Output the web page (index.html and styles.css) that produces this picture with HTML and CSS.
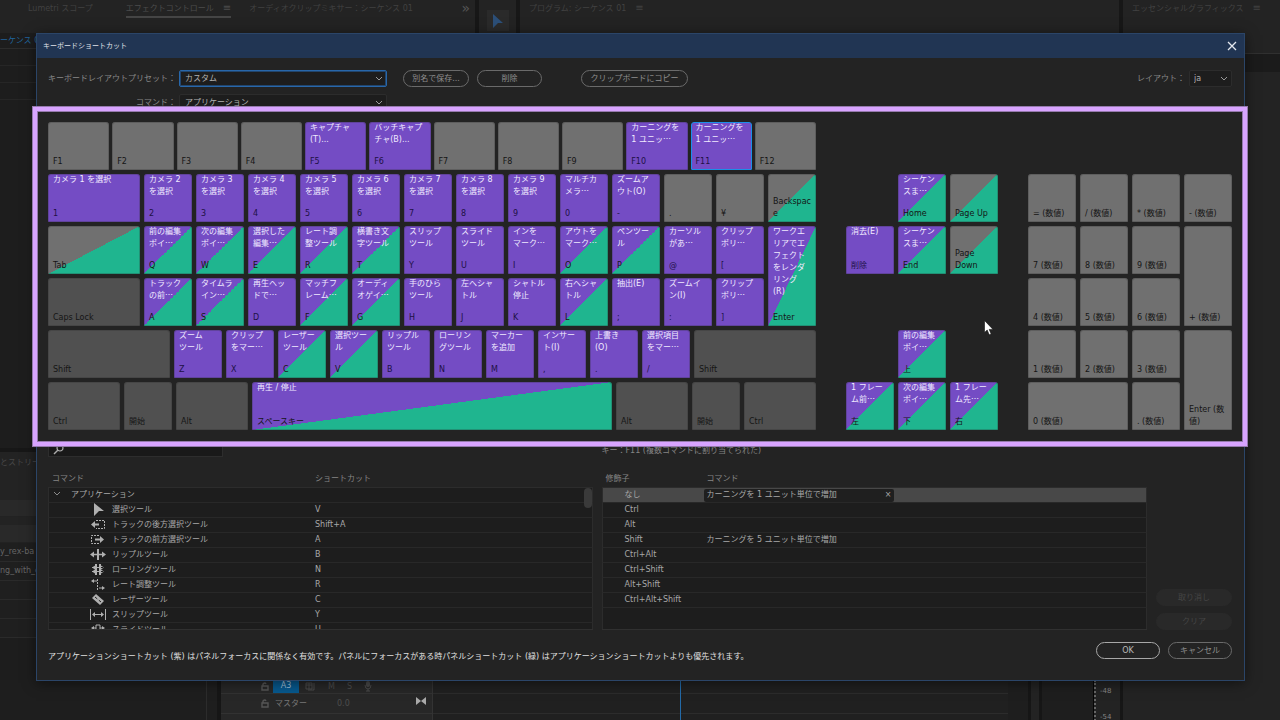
FILE: index.html
```html
<!DOCTYPE html>
<html lang="ja">
<head>
<meta charset="utf-8">
<title>キーボードショートカット</title>
<link rel="stylesheet" href="styles.css">
</head>
<body>
<div class="app">
  <div class="topbar">
    <div class="panel tabs">
      <span class="tab">Lumetri スコープ</span>
      <span class="tab active">エフェクトコントロール<b>≡</b></span>
      <span class="tab">オーディオクリップミキサー：シーケンス 01</span>
      <span class="more">»</span>
    </div>
    <div class="panel tools"><span class="tool"><svg width="10" height="14" viewBox="0 0 10 14"><path d="M0 0L10 9L5 9L0 14Z" fill="#2c4f78"/></svg></span></div>
    <div class="panel tabs program"><span class="tab">プログラム: シーケンス 01<b>≡</b></span></div>
    <div class="panel tabs graphics"><span class="tab">エッセンシャルグラフィックス<b>≡</b></span></div>
  </div>
  <div class="middle">
    <div class="left-strip">
      <div class="seq">ーケンス 01</div>
      <div class="track"></div><div class="track"></div><div class="track"></div>
      <div class="blank"></div>
      <div class="history">とストリー</div>
      <div class="bar"></div>
      <div class="bar second"></div>
      <div class="file">y_rex-ba</div>
      <div class="file">ng_with_c</div>
      <div class="file"></div><div class="file"></div><div class="file"></div>
    </div>
    <div class="right-strip"><div class="band"></div></div>
  </div>
  <div class="timeline">
    <div class="project"></div>
    <div class="heads">
      <div class="head first">
        <svg width="8" height="9" viewBox="0 0 8 9"><path d="M1 4H7V8H1ZM2 4V2Q4 0 5 2" fill="none" stroke="#555" stroke-width="1.4"/></svg>
        <span class="a3">A3</span>
        <svg width="11" height="9" viewBox="0 0 11 9"><path d="M1 1H7V7H1ZM1 3H7M4 1V7M9 1V8H3" fill="none" stroke="#4a4a4a"/></svg>
        <span>M</span><span>S</span>
        <svg width="8" height="11" viewBox="0 0 8 11"><rect x="2" y="0" width="4" height="6" rx="2" fill="#4a4a4a"/><path d="M1 4Q1 8 4 8Q7 8 7 4M4 8V10M2 10H6" fill="none" stroke="#4a4a4a"/></svg>
      </div>
      <div class="head">
        <svg width="8" height="9" viewBox="0 0 8 9"><path d="M1 4H7V8H1ZM2 4V2Q4 0 5 2" fill="none" stroke="#555" stroke-width="1.4"/></svg>
        <span class="master">マスター</span><span class="zero">0.0</span>
        <svg class="bow" width="10" height="8" viewBox="0 0 10 8"><path d="M0 0L5 4L10 0V8L5 4L0 8Z" fill="#aaa"/></svg>
      </div>
      <div class="head"></div>
    </div>
    <div class="lanes"><div class="lane first"></div><div class="lane"></div><div class="lane"></div><i class="playhead"></i></div>
    <div class="gutter"></div>
    <div class="meter"></div>
    <div class="scale"><span>-48</span><span>-54</span></div>
    <div class="rest"></div>
  </div>

  <section class="dialog" role="dialog" aria-labelledby="dlg-title">
    <header class="title"><h1 id="dlg-title">キーボードショートカット</h1>
      <button class="close" aria-label="閉じる"><svg width="10" height="10" viewBox="0 0 10 10"><path d="M1 1L9 9M9 1L1 9" stroke="#e4e8ee" stroke-width="1.3"/></svg></button>
    </header>
    <div class="form">
      <div class="row">
        <label class="lead" for="preset">キーボードレイアウトプリセット：</label>
        <span class="select focus"><select id="preset"><option>カスタム</option></select><svg width="8" height="5" viewBox="0 0 8 5"><path d="M1 1L4 4L7 1" fill="none" stroke="#9a9a9a"/></svg></span>
        <button class="pill save">別名で保存...</button>
        <button class="pill del">削除</button>
        <button class="pill copy">クリップボードにコピー</button>
        <label class="layout-label" for="layout">レイアウト：</label>
        <span class="select small"><select id="layout"><option>ja</option></select><svg width="8" height="5" viewBox="0 0 8 5"><path d="M1 1L4 4L7 1" fill="none" stroke="#9a9a9a"/></svg></span>
      </div>
      <div class="row">
        <label class="lead" for="command">コマンド：</label>
        <span class="select"><select id="command"><option>アプリケーション</option></select><svg width="8" height="5" viewBox="0 0 8 5"><path d="M1 1L4 4L7 1" fill="none" stroke="#9a9a9a"/></svg></span>
      </div>
    </div>

    <div class="keyboard">
      <div class="main-keys">
        <div class="keys fn">
          <button class="key"><small>F1</small></button>
          <button class="key"><small>F2</small></button>
          <button class="key"><small>F3</small></button>
          <button class="key"><small>F4</small></button>
          <button class="key app-key"><span>キャプチャ<br>(T)...</span><small>F5</small></button>
          <button class="key app-key"><span>バッチキャプ<br>チャ(B)...</span><small>F6</small></button>
          <button class="key"><small>F7</small></button>
          <button class="key"><small>F8</small></button>
          <button class="key"><small>F9</small></button>
          <button class="key app-key"><span>カーニングを<br>1 ユニッ<i>…</i></span><small>F10</small></button>
          <button class="key app-key current"><span>カーニングを<br>1 ユニッ<i>…</i></span><small>F11</small></button>
          <button class="key"><small>F12</small></button>
        </div>
        <div class="keys letters">
          <button class="key app-key"><span>カメラ 1 を選択</span><small>1</small></button>
          <button class="key app-key"><span>カメラ 2<br>を選択</span><small>2</small></button>
          <button class="key app-key"><span>カメラ 3<br>を選択</span><small>3</small></button>
          <button class="key app-key"><span>カメラ 4<br>を選択</span><small>4</small></button>
          <button class="key app-key"><span>カメラ 5<br>を選択</span><small>5</small></button>
          <button class="key app-key"><span>カメラ 6<br>を選択</span><small>6</small></button>
          <button class="key app-key"><span>カメラ 7<br>を選択</span><small>7</small></button>
          <button class="key app-key"><span>カメラ 8<br>を選択</span><small>8</small></button>
          <button class="key app-key"><span>カメラ 9<br>を選択</span><small>9</small></button>
          <button class="key app-key"><span>マルチカ<br>メラ<i>…</i></span><small>0</small></button>
          <button class="key app-key"><span>ズームア<br>ウト(O)</span><small>-</small></button>
          <button class="key"><small>.</small></button>
          <button class="key"><small>¥</small></button>
          <button class="key panel-key"><small>Backspac<br>e</small></button>

          <button class="key panel-key"><small>Tab</small></button>
          <button class="key both"><span>前の編集<br>ポイ<i>…</i></span><small>Q</small></button>
          <button class="key both"><span>次の編集<br>ポイ<i>…</i></span><small>W</small></button>
          <button class="key both"><span>選択した<br>編集<i>…</i></span><small>E</small></button>
          <button class="key both"><span>レート調<br>整ツール</span><small>R</small></button>
          <button class="key both"><span>横書き文<br>字ツール</span><small>T</small></button>
          <button class="key app-key"><span>スリップ<br>ツール</span><small>Y</small></button>
          <button class="key app-key"><span>スライド<br>ツール</span><small>U</small></button>
          <button class="key app-key"><span>インを<br>マーク<i>…</i></span><small>I</small></button>
          <button class="key both"><span>アウトを<br>マーク<i>…</i></span><small>O</small></button>
          <button class="key both"><span>ペンツー<br>ル</span><small>P</small></button>
          <button class="key app-key"><span>カーソル<br>があ<i>…</i></span><small>@</small></button>
          <button class="key app-key"><span>クリップ<br>ポリ<i>…</i></span><small>[</small></button>
          <button class="key both tall"><span>ワークエ<br>リアでエ<br>フェクト<br>をレンダ<br>リング<br>(R)</span><small>Enter</small></button>

          <button class="key mod"><small>Caps Lock</small></button>
          <button class="key both"><span>トラック<br>の前<i>…</i></span><small>A</small></button>
          <button class="key both"><span>タイムラ<br>イン<i>…</i></span><small>S</small></button>
          <button class="key app-key"><span>再生ヘッ<br>ドで<i>…</i></span><small>D</small></button>
          <button class="key both"><span>マッチフ<br>レーム<i>…</i></span><small>F</small></button>
          <button class="key both"><span>オーディ<br>オゲイ<i>…</i></span><small>G</small></button>
          <button class="key app-key"><span>手のひら<br>ツール</span><small>H</small></button>
          <button class="key app-key"><span>左へシャ<br>トル</span><small>J</small></button>
          <button class="key app-key"><span>シャトル<br>停止</span><small>K</small></button>
          <button class="key both"><span>右へシャ<br>トル</span><small>L</small></button>
          <button class="key app-key"><span>抽出(E)</span><small>;</small></button>
          <button class="key app-key"><span>ズームイ<br>ン(I)</span><small>:</small></button>
          <button class="key app-key"><span>クリップ<br>ポリ<i>…</i></span><small>]</small></button>
        </div>
        <div class="keys shift-row">
          <button class="key mod"><small>Shift</small></button>
          <button class="key app-key"><span>ズーム<br>ツール</span><small>Z</small></button>
          <button class="key app-key"><span>クリップ<br>をマー<i>…</i></span><small>X</small></button>
          <button class="key both"><span>レーザー<br>ツール</span><small>C</small></button>
          <button class="key both"><span>選択ツー<br>ル</span><small>V</small></button>
          <button class="key app-key"><span>リップル<br>ツール</span><small>B</small></button>
          <button class="key app-key"><span>ローリン<br>グツール</span><small>N</small></button>
          <button class="key app-key"><span>マーカー<br>を追加</span><small>M</small></button>
          <button class="key app-key"><span>インサー<br>ト(I)</span><small>,</small></button>
          <button class="key app-key"><span>上書き<br>(O)</span><small>.</small></button>
          <button class="key app-key"><span>選択項目<br>をマー<i>…</i></span><small>/</small></button>
          <button class="key mod"><small>Shift</small></button>
        </div>
        <div class="keys space-row">
          <button class="key mod"><small>Ctrl</small></button>
          <button class="key mod"><small>開始</small></button>
          <button class="key mod"><small>Alt</small></button>
          <button class="key both"><span>再生 / 停止</span><small>スペースキー</small></button>
          <button class="key mod"><small>Alt</small></button>
          <button class="key mod"><small>開始</small></button>
          <button class="key mod"><small>Ctrl</small></button>
        </div>
      </div>
      <div class="keys nav">
        <button class="key both home"><span>シーケン<br>スま<i>…</i></span><small>Home</small></button>
        <button class="key panel-key pgup"><small>Page Up</small></button>
        <button class="key app-key erase"><span>消去(E)</span><small>削除</small></button>
        <button class="key both end"><span>シーケン<br>スま<i>…</i></span><small>End</small></button>
        <button class="key panel-key pgdn"><small>Page<br>Down</small></button>
        <button class="key both up"><span>前の編集<br>ポイ<i>…</i></span><small>上</small></button>
        <button class="key both left"><span>1 フレー<br>ム前<i>…</i></span><small>左</small></button>
        <button class="key both down"><span>次の編集<br>ポイ<i>…</i></span><small>下</small></button>
        <button class="key both right"><span>1 フレー<br>ム先<i>…</i></span><small>右</small></button>
      </div>
      <div class="keys numpad">
        <button class="key"><small>= (数値)</small></button>
        <button class="key"><small>/ (数値)</small></button>
        <button class="key"><small>* (数値)</small></button>
        <button class="key"><small>- (数値)</small></button>
        <button class="key"><small>7 (数値)</small></button>
        <button class="key"><small>8 (数値)</small></button>
        <button class="key"><small>9 (数値)</small></button>
        <button class="key tall"><small>+ (数値)</small></button>
        <button class="key"><small>4 (数値)</small></button>
        <button class="key"><small>5 (数値)</small></button>
        <button class="key"><small>6 (数値)</small></button>
        <button class="key"><small>1 (数値)</small></button>
        <button class="key"><small>2 (数値)</small></button>
        <button class="key"><small>3 (数値)</small></button>
        <button class="key tall"><small>Enter (数<br>値)</small></button>
        <button class="key wide"><small>0 (数値)</small></button>
        <button class="key"><small>. (数値)</small></button>
      </div>
    </div>

    <div class="lower">
      <div class="commands">
        <div class="search"><svg width="12" height="12" viewBox="0 0 12 12"><circle cx="7" cy="4" r="3" fill="none" stroke="#aaa" stroke-width="1.2"/><path d="M5 6L1 10" stroke="#aaa" stroke-width="1.4"/></svg><input type="text" aria-label="コマンドを検索"></div>
        <div class="list">
          <table>
            <thead><tr><th class="name">コマンド</th><th>ショートカット</th></tr></thead>
            <tbody>
              <tr class="group"><td><svg class="chev" width="8" height="5" viewBox="0 0 8 5"><path d="M1 1L4 4L7 1" fill="none" stroke="#8a8a8a"/></svg>アプリケーション</td><td></td></tr>
              <tr><td><svg class="ic" width="16" height="13" viewBox="0 0 16 13"><path d="M4 0L14 8L9 8L4 13Z"/></svg>選択ツール</td><td>V</td></tr>
              <tr><td><svg class="ic" width="16" height="13" viewBox="0 0 16 13"><path d="M1 6.5L5 3V5.5H9V7.5H5V10Z"/><path class="dash" d="M6 2.5H14.500V10.500H6"/></svg>トラックの後方選択ツール</td><td>Shift+A</td></tr>
              <tr><td><svg class="ic" width="16" height="13" viewBox="0 0 16 13"><path d="M14 6.500L10 3V5.500H5V7.500H10V10Z"/><path class="dash" d="M9 2.500H1.500V10.500H9"/></svg>トラックの前方選択ツール</td><td>A</td></tr>
              <tr><td><svg class="ic" width="16" height="13" viewBox="0 0 16 13"><path d="M7 1H9V12H7ZM0 6.500L4 3.500V5.800H12V3.500L16 6.500L12 9.500V7.200H4V9.500Z"/></svg>リップルツール</td><td>B</td></tr>
              <tr><td><svg class="ic" width="16" height="13" viewBox="0 0 16 13"><path d="M5 1H7V12H5ZM9 1H11V12H9ZM2 4H14V5H2ZM2 8H14V9H2ZM2 4.500L5 2.500V6.500ZM14 4.500L11 2.500V6.500ZM2 8.500L5 6.500V10.500ZM14 8.500L11 6.500V10.500Z"/></svg>ローリングツール</td><td>N</td></tr>
              <tr><td><svg class="ic" width="16" height="13" viewBox="0 0 16 13"><path d="M1 3L4 1V2.500H7V3.500H4V5ZM15 10L12 8V9.500H9V10.500H12V12Z"/><path class="dash" d="M7.500 1V12"/></svg>レート調整ツール</td><td>R</td></tr>
              <tr><td><svg class="ic" width="16" height="13" viewBox="0 0 16 13"><path d="M2 5L6 1L14 8L10 12Z"/><path d="M5 4L11 9" stroke="#1d1d1d" stroke-dasharray="3 2"/></svg>レーザーツール</td><td>C</td></tr>
              <tr><td><svg class="ic" width="16" height="13" viewBox="0 0 16 13"><path d="M0 1H1V12H0ZM15 1H16V12H15ZM2 6.500L5 4V6H11V4L14 6.500L11 9V7H5V9Z"/></svg>スリップツール</td><td>Y</td></tr>
              <tr><td><svg class="ic" width="16" height="13" viewBox="0 0 16 13"><path d="M1 5L4 3V7ZM15 5L12 3V7Z"/><path d="M6 8V2H10V8M4 5H6M10 5H12" fill="none" stroke="#b0b0b0"/></svg>スライドツール</td><td>U</td></tr>
            </tbody>
          </table>
          <i class="thumb"></i>
        </div>
      </div>
      <div class="modifiers">
        <p>キー：F11 (複数コマンドに割り当てられた)</p>
        <div class="list">
          <table>
            <thead><tr><th class="name">修飾子</th><th>コマンド</th></tr></thead>
            <tbody>
              <tr class="group selected"><td>なし</td><td><span class="token">カーニングを 1 ユニット単位で増加<button aria-label="削除">×</button></span></td></tr>
              <tr><td>Ctrl</td><td></td></tr>
              <tr><td>Alt</td><td></td></tr>
              <tr><td>Shift</td><td>カーニングを 5 ユニット単位で増加</td></tr>
              <tr><td>Ctrl+Alt</td><td></td></tr>
              <tr><td>Ctrl+Shift</td><td></td></tr>
              <tr><td>Alt+Shift</td><td></td></tr>
              <tr><td>Ctrl+Alt+Shift</td><td></td></tr>
              <tr class="fill"><td></td><td></td></tr>
            </tbody>
          </table>
        </div>
      </div>
      <div class="side"><button class="pill" disabled>取り消し</button><button class="pill" disabled>クリア</button></div>
    </div>
    <footer class="foot">
      <p>アプリケーションショートカット (紫) はパネルフォーカスに関係なく有効です。パネルにフォーカスがある時パネルショートカット (緑) はアプリケーションショートカットよりも優先されます。</p>
      <button class="pill ok">OK</button><button class="pill cancel">キャンセル</button>
    </footer>
  </section>
  <svg class="cursor" width="10" height="16" viewBox="0 0 10 16"><path d="M.5 .5V12.500L3.200 10L5.200 14.800L7.200 14L5.200 9.400H9Z" fill="#fff" stroke="#111" stroke-width=".6"/></svg>
</div>
</body>
</html>
```
FILE: styles.css
```css
* { box-sizing: border-box; }
body, h1, p { margin: 0; }
body, button, input, select {
  font-family: "DejaVu Sans", "Noto Sans CJK JP", sans-serif;
  font-size: 8px;
  line-height: 12px;
}
body { background: #232323; color: #a8a8a8; }
button, input, select { color: inherit; border: 0; padding: 0; background: none; }
svg { flex: none; }

/* Application behind the dialog */
.app { position: relative; height: 100vh; min-height: 681px; overflow: hidden; display: grid; grid-template-rows: 33px 1fr 40px; }
.topbar { display: grid; grid-template-columns: 475px 37px minmax(0, 1fr) 157px; gap: 4px; background: #171717; }
.panel { background: #232323; color: #414141; white-space: nowrap; }
.tabs { display: flex; align-items: flex-start; gap: 18px; padding: 2px 5px 0 28px; }
.tabs.program, .tabs.graphics { padding-left: 9px; }
.tab { height: 16px; line-height: 13px; }
.tab b { margin-left: 9px; font-size: 10px; line-height: 12px; font-weight: 400; }
.tab.active { margin-left: 15px; color: #4c4c4c; border-bottom: 2px solid #454545; }
.more { margin-left: auto; font-size: 14px; color: #555; }
.tools { display: flex; justify-content: center; padding-top: 10px; }
.tool { width: 22px; height: 21px; background: #2a2a2a; display: grid; place-items: center; }

.middle { display: flex; justify-content: space-between; background: #1b1b1b; }
.left-strip { width: 36px; overflow: hidden; white-space: nowrap; background: #1d1d1d; }
.seq { height: 16px; line-height: 15px; color: #20649c; border-bottom: 1px solid #2c2c2c; }
.track { height: 17px; border-bottom: 1px solid #262626; }
.blank { height: 352px; border-bottom: 4px solid #171717; background: #1d1d1d; }
.history { height: 48px; padding-top: 5px; background: #232323; color: #484848; }
.bar { height: 17px; background: #292929; border-bottom: 1px solid #222; }
.bar.second { height: 26px; border-top: 8px solid #232323; }
.file { height: 19px; line-height: 18px; color: #666; border-bottom: 1px solid #2a2a2a; background: #1f1f1f; }
.right-strip { width: 36px; padding-top: 20px; background: #232323; }
.band { height: 19px; background: #1b1b1b; border-top: 1px solid #303030; }

.timeline { display: grid; grid-template-columns: 207px 226px minmax(0, 1fr) 34px 52px 29px 157px; background: #1e1e1e; }
.project { border-right: 1px solid #2c2c2c; }
.heads { margin-left: 10px; background: #272727; border-left: 4px solid #161616; border-right: 1px solid #333; }
.head { height: 20px; display: flex; align-items: center; padding-left: 40px; border-top: 1px solid #323232; color: #4d4d4d; }
.head.first { height: 13px; gap: 12px; border: 0; }
.head.first svg:first-child { margin-right: -8px; }
.a3 { width: 26px; text-align: center; background: #07588d; color: #a0bfd5; height: 13px; line-height: 11px; margin-right: -6px; }
.master { margin-left: 6px; color: #777; }
.zero { margin-left: 30px; }
.bow { margin: -6px 6px 0 auto; }
.lanes { position: relative; background: #202020; }
.lane { height: 20px; border-top: 1px solid #2c2c2c; }
.lane.first { height: 13px; border: 0; }
.playhead { position: absolute; left: 43%; top: 0; bottom: 0; width: 1px; background: #236aa8; }
.gutter { margin-left: 20px; background: #232323; border-left: 3px solid #161616; border-right: 3px solid #161616; }
.meter { border-right: 1px solid #050505; }
.scale { display: flex; flex-direction: column; gap: 14px; padding: 5px 0 0 4px; overflow: hidden; background: #232323; border-left: 2px dotted #666; border-right: 3px solid #161616; color: #858585; font-size: 7px; }
.rest { background: #232323; }

/* Dialog */
.dialog { position: absolute; top: 33px; left: 36px; right: 35px; background: #232323; border: 1px solid #2b4568; box-shadow: 0 2px 12px rgba(0, 0, 0, .5); }
.title { height: 24px; padding: 0 7px 0 6px; display: flex; align-items: center; justify-content: space-between; background: #213553; color: #e0e4ea; }
.title h1 { font-size: 7px; font-weight: 400; }
.close { display: grid; }
.form { padding: 12px 12px 0 11px; display: grid; gap: 7px; }
.row { display: flex; align-items: center; height: 17px; white-space: nowrap; color: #888; }
.lead { width: 131px; padding-right: 3px; text-align: right; }
.select { position: relative; width: 208px; height: 17px; background: #1d1d1d; border: 1px solid #2c2c2c; border-radius: 2px; color: #b0b0b0; }
.select.focus { border-color: #2867aa; box-shadow: inset 0 0 0 1px #22456c; }
.select.small { width: 43px; }
.select select { width: 100%; height: 15px; padding-left: 5px; appearance: none; outline: 0; }
.select.small select { padding-left: 4px; }
.select svg { position: absolute; right: 3px; top: 5px; pointer-events: none; }
.pill { height: 17px; border: 1px solid #6a6a6a; border-radius: 9px; color: #8e8e8e; line-height: 13px; white-space: nowrap; }
.save { width: 66px; margin-left: 16px; }
.del { width: 65px; margin-left: 8px; }
.copy { width: 107px; margin-left: 39px; }
.layout-label { margin-left: auto; margin-right: 4px; }

/* Keyboard map */
.keyboard { position: relative; z-index: 1; margin: -5px -4px 0 -5px; padding: 11px 11px 12px; border: 5px solid #d8a4ff; outline: 1px solid #957aad; outline-offset: -1px; box-shadow: inset 0 0 0 1px #957aad; background: #232323; display: grid; grid-template-columns: 768fr 152fr 204fr; gap: 30px; }
.main-keys { display: grid; gap: 4px; min-width: 0; }
.keys { display: grid; grid-auto-rows: 48px; gap: 4px; min-width: 0; align-content: start; }
.fn { grid-template-columns: repeat(12, minmax(0, 1fr)); column-gap: 3px; }
.letters { grid-template-columns: minmax(0, 92fr) repeat(13, minmax(0, 48fr)); }
.shift-row { grid-template-columns: minmax(0, 122fr) repeat(10, minmax(0, 48fr)) minmax(0, 122fr); }
.space-row { grid-template-columns: minmax(0, 72fr) minmax(0, 48fr) minmax(0, 72fr) minmax(0, 360fr) minmax(0, 72fr) minmax(0, 48fr) minmax(0, 72fr); }
.nav {
  padding-top: 52px;
  grid-template-columns: repeat(3, minmax(0, 1fr));
  grid-template-rows: repeat(5, 48px);
  grid-template-areas: ". home pgup" "erase end pgdn" ". . ." ". up ." "left down right";
}
.numpad { padding-top: 52px; grid-template-columns: repeat(4, minmax(0, 1fr)); }
.home { grid-area: home; }
.pgup { grid-area: pgup; }
.erase { grid-area: erase; }
.end { grid-area: end; }
.pgdn { grid-area: pgdn; }
.up { grid-area: up; }
.left { grid-area: left; }
.down { grid-area: down; }
.right { grid-area: right; }
.tall { grid-row: span 2; }
.wide { grid-column: span 2; }
.key { display: flex; flex-direction: column; justify-content: space-between; align-items: flex-start; padding: 0 0 2px 5px; border-radius: 3px 3px 1px 1px; background: #707070; box-shadow: inset 0 0 0 1px rgba(40, 40, 40, .25); text-align: left; white-space: nowrap; overflow: hidden; color: #f0eaff; }
.key small { margin-top: auto; font-size: 8px; color: #151515; }
.key i { font-family: "Noto Sans CJK JP", sans-serif; font-style: normal; line-height: 1; }
.mod { background: #505050; }
.app-key { background: #744cc4; }
.app-key small { color: #211045; }
.both { background: linear-gradient(to bottom right, #744cc4 50%, #1fb58f 50%); }
.panel-key { background: linear-gradient(to bottom right, #707070 50%, #1fb58f 50%); }
.both span { margin-bottom: -72px; }
.current { padding: 0 0 1px 4px; border: 1px solid #1c8fe8; box-shadow: none; }
.current span { margin-top: -1px; }

/* Command lists */
.lower { display: grid; grid-template-columns: minmax(0, 545fr) minmax(0, 546fr) 76px; gap: 9px; padding: 0 12px 0 11px; margin-top: -7px; }
.search { width: 175px; height: 17px; display: flex; align-items: center; padding: 2px 4px 0; background: #191919; border: 1px solid #2d2d2d; }
.search input { min-width: 0; flex: 1; height: 12px; outline: 0; }
.modifiers p { height: 17px; line-height: 21px; color: #858585; }
.list { position: relative; margin-top: 14px; height: 159px; overflow: hidden; border-bottom: 1px solid #303030; }
.list table { width: 100%; border-collapse: separate; border-spacing: 0; table-layout: fixed; }
.list th { height: 16px; padding: 0 4px; text-align: left; font-weight: 400; color: #858585; }
.list td { height: 15px; line-height: 12px; padding: 0; background: #1d1d1d; border-bottom: 1px solid #282828; white-space: nowrap; vertical-align: middle; }
.list .group td { height: 16px; border-top: 1px solid #2c2c2c; }
.list td:first-child { border-left: 1px solid #2c2c2c; }
.list td:last-child { border-right: 1px solid #2c2c2c; }
.commands .name { width: 263px; }
.commands td:first-child { padding-left: 41px; }
.commands td:last-child { padding-left: 4px; }
.commands .group td:first-child { padding-left: 4px; }
.chev { margin-right: 10px; vertical-align: 1px; }
.ic { display: inline-block; margin: -1px 6px -1px 0; vertical-align: middle; fill: #b0b0b0; }
.ic .dash { fill: none; stroke: #b0b0b0; stroke-dasharray: 2 1; }
.thumb { position: absolute; right: 1px; top: 17px; width: 8px; height: 20px; border-radius: 4px; background: #3a3a3a; }
.modifiers .name { width: 101px; }
.modifiers td:first-child { padding-left: 22px; }
.modifiers td:last-child { padding-left: 4px; }
.list .selected td { background: #484848; }
.list .selected td:last-child { padding-left: 1px; }
.token { display: flex; justify-content: space-between; width: 190px; height: 13px; padding: 0 2px 0 3px; background: #1f1f1f; border-radius: 2px; }
.list .fill td { height: 40px; }
.side { display: flex; flex-direction: column; justify-content: flex-end; gap: 7px; }
.side .pill { border-color: #292929; background: #292929; color: #454545; }
.foot { display: flex; align-items: flex-start; gap: 8px; padding: 12px 12px 17px 11px; color: #e0e0e0; }
.foot p { flex: 1; margin-top: 9px; white-space: nowrap; }
.foot .pill { width: 64px; }
.foot .ok { border-color: #a8a8a8; color: #b8b8b8; }
.cursor { position: absolute; left: 984px; top: 320px; z-index: 2; }
```
